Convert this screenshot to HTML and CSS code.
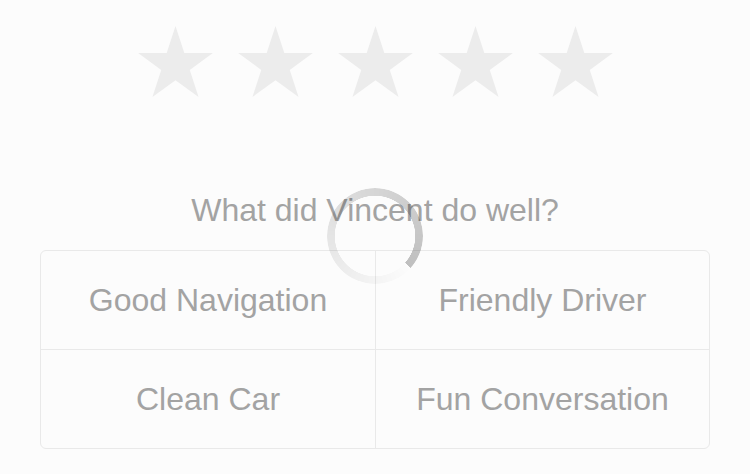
FILE: index.html
```html
<!DOCTYPE html>
<html>
<head lang="en">
    <meta charset="UTF-8">
    <title>Rate your trip</title>
    <link rel="stylesheet" href="styles.css">
</head>
<body>
<div id="rating">
    <div class="stars">
        <svg class="star" viewBox="0 0 75 71"><polygon points="37.5,0 46.31,27.12 74.83,27.12 51.76,43.88 60.57,71 37.5,54.24 14.43,71 23.24,43.88 0.17,27.12 28.69,27.12"/></svg>
        <svg class="star" viewBox="0 0 75 71"><polygon points="37.5,0 46.31,27.12 74.83,27.12 51.76,43.88 60.57,71 37.5,54.24 14.43,71 23.24,43.88 0.17,27.12 28.69,27.12"/></svg>
        <svg class="star" viewBox="0 0 75 71"><polygon points="37.5,0 46.31,27.12 74.83,27.12 51.76,43.88 60.57,71 37.5,54.24 14.43,71 23.24,43.88 0.17,27.12 28.69,27.12"/></svg>
        <svg class="star" viewBox="0 0 75 71"><polygon points="37.5,0 46.31,27.12 74.83,27.12 51.76,43.88 60.57,71 37.5,54.24 14.43,71 23.24,43.88 0.17,27.12 28.69,27.12"/></svg>
        <svg class="star" viewBox="0 0 75 71"><polygon points="37.5,0 46.31,27.12 74.83,27.12 51.76,43.88 60.57,71 37.5,54.24 14.43,71 23.24,43.88 0.17,27.12 28.69,27.12"/></svg>
    </div>

    <p class="question">What did Vincent do well?</p>

    <div class="compliments">
        <div class="compliment">Good Navigation</div>
        <div class="compliment">Friendly Driver</div>
        <div class="compliment">Clean Car</div>
        <div class="compliment">Fun Conversation</div>
    </div>

    <div class="spinner"></div>
</div>
</body>
</html>
```

FILE: styles.css
```css
body, html {
    margin: 0;
    height: 100%;
    width: 100%;
    overflow: hidden;
    background-color: #fcfcfc;
}

#rating {
    position: relative;
    padding: 26px 40px 0;
    font-family: "Liberation Sans", Arial, sans-serif;
    color: #a3a3a3;
}

/* Stars */
.stars {
    display: flex;
    justify-content: center;
    gap: 25px;
}

.star {
    width: 75px;
    height: 71px;
    fill: #ececec;
}

.question {
    margin: 94px 0 21px;
    text-align: center;
    font-size: 32px;
    line-height: 38px;
}

/* Compliment grid */
.compliments {
    display: grid;
    grid-template-columns: 335px 1fr;
    border: 1px solid #e9e9e9;
    border-radius: 6px;
}

.compliment {
    display: flex;
    align-items: center;
    justify-content: center;
    height: 98px;
    font-size: 32px;
}

.compliment:nth-child(odd) {
    border-right: 1px solid #e9e9e9;
}

.compliment:nth-child(-n+2) {
    border-bottom: 1px solid #e9e9e9;
}

/* Loading overlay */
.spinner {
    position: absolute;
    left: 327px;
    top: 188px;
    width: 96px;
    height: 96px;
    border-radius: 50%;
    background: conic-gradient(from 132deg, rgba(0, 0, 0, 0), rgba(0, 0, 0, 0.24));
    -webkit-mask: radial-gradient(farthest-side, transparent calc(100% - 8px), #000 calc(100% - 7.5px));
    mask: radial-gradient(farthest-side, transparent calc(100% - 8px), #000 calc(100% - 7.5px));
}
```
